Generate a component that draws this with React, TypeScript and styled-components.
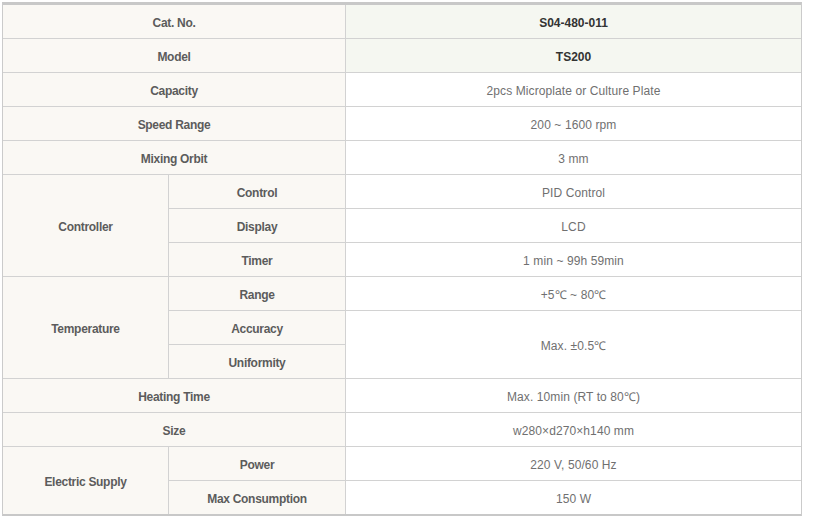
import React from "react";
import styled, { createGlobalStyle } from "styled-components";

const Global = createGlobalStyle`
  html, body { margin: 0; padding: 0; background: #ffffff; }
  body { font-family: "Liberation Sans", Arial, sans-serif; }
`;

const Page = styled.div`
  padding: 2px 0 0 2px;
`;

const SpecTable = styled.div`
  display: grid;
  grid-template-columns: 165px 176px 455px;
  grid-auto-rows: 33px;
  gap: 1px;
  width: 798px;
  background: #d2d2d2;
  border-top: 3px solid #c8c8c8;
  border-bottom: 3px solid #c8c8c8;
  border-left: 1px solid #cbcbcb;
  border-right: 1px solid #cbcbcb;
`;

const Cell = styled.div`
  display: flex;
  align-items: center;
  justify-content: center;
  padding-top: 2px;
  font-size: 12px;
  white-space: nowrap;
`;

const Label = styled(Cell)<{ $cols?: number; $rows?: number }>`
  background: #faf8f4;
  color: #5c5c5c;
  font-weight: bold;
  letter-spacing: -0.3px;
  grid-column: span ${(p) => p.$cols ?? 1};
  grid-row: span ${(p) => p.$rows ?? 1};
`;

const Value = styled(Cell)<{ $head?: boolean; $rows?: number }>`
  background: ${(p) => (p.$head ? "#f5f7f1" : "#ffffff")};
  color: ${(p) => (p.$head ? "#333333" : "#707070")};
  font-weight: ${(p) => (p.$head ? "bold" : "normal")};
  letter-spacing: ${(p) => (p.$head ? "0" : "0.1px")};
  grid-column: 3;
  grid-row: span ${(p) => p.$rows ?? 1};
`;

export default function App() {
  return (
    <>
      <Global />
      <Page>
        <SpecTable>
          <Label $cols={2}>Cat. No.</Label>
          <Value $head>S04-480-011</Value>

          <Label $cols={2}>Model</Label>
          <Value $head>TS200</Value>

          <Label $cols={2}>Capacity</Label>
          <Value>2pcs Microplate or Culture Plate</Value>

          <Label $cols={2}>Speed Range</Label>
          <Value>200 ~ 1600 rpm</Value>

          <Label $cols={2}>Mixing Orbit</Label>
          <Value>3 mm</Value>

          <Label $rows={3}>Controller</Label>
          <Label>Control</Label>
          <Value>PID Control</Value>
          <Label>Display</Label>
          <Value>LCD</Value>
          <Label>Timer</Label>
          <Value>1 min ~ 99h 59min</Value>

          <Label $rows={3}>Temperature</Label>
          <Label>Range</Label>
          <Value>+5℃ ~ 80℃</Value>
          <Label>Accuracy</Label>
          <Value $rows={2}>Max. ±0.5℃</Value>
          <Label>Uniformity</Label>

          <Label $cols={2}>Heating Time</Label>
          <Value>Max. 10min (RT to 80℃)</Value>

          <Label $cols={2}>Size</Label>
          <Value>w280×d270×h140 mm</Value>

          <Label $rows={2}>Electric Supply</Label>
          <Label>Power</Label>
          <Value>220 V, 50/60 Hz</Value>
          <Label>Max Consumption</Label>
          <Value>150 W</Value>
        </SpecTable>
      </Page>
    </>
  );
}
